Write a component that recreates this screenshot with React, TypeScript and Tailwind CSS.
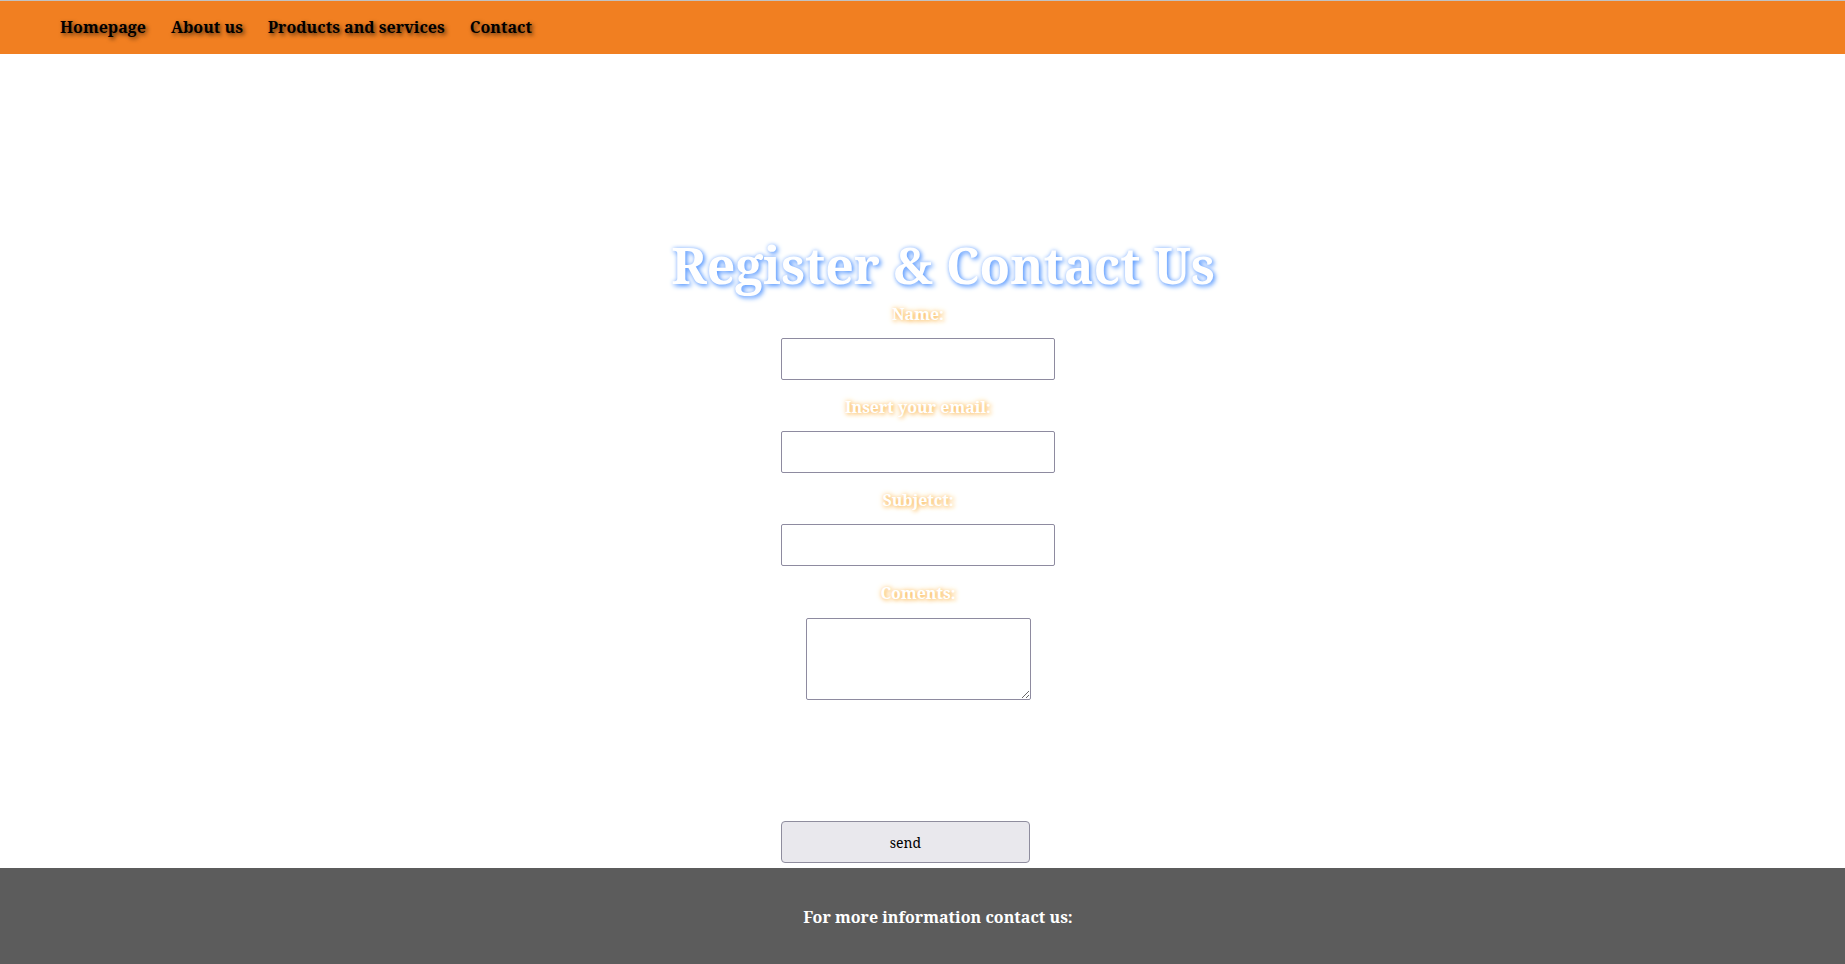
import React from "react";

const serif = "[font-family:'Noto_Serif','DejaVu_Serif',serif]";

export default function App() {
  const navItems = ["Homepage", "About us", "Products and services", "Contact"];
  const labelCls =
    "block text-[16px] leading-[16px] font-bold text-white [text-shadow:1px_1px_4px_#f9b24a,0_0_6px_#ffd89a]";
  const inputCls =
    "block w-[274px] h-[42px] border border-[#8e8ba0] rounded-[2px] bg-white outline-none";
  return (
    <div className={`min-h-screen bg-white ${serif}`}>
      <div className="border-t border-[#c2c2c2]" />
      <nav className="h-[53px] bg-[#f17f21] flex items-center pl-[60px] gap-[25px]">
        {navItems.map((n) => (
          <a
            key={n}
            className="text-[16px] leading-[53px] font-bold text-black [text-shadow:2px_2px_4px_rgba(0,0,0,0.65)]"
          >
            {n}
          </a>
        ))}
      </nav>

      <main className="flex flex-col">
        <h1 className="mt-[186px] pl-[41px] text-center text-[50px] leading-[50px] font-bold text-white [text-shadow:2px_2px_5px_#5d9cff,0_0_4px_#a9c9ff]">
          Register &amp; Contact Us
        </h1>

        <form className="flex flex-col items-center pr-[9px] mt-[16px]">
          <label className={labelCls}>Name:</label>
          <input type="text" className={`${inputCls} mt-[16px]`} />

          <label className={`${labelCls} mt-[19px]`}>Insert your email:</label>
          <input type="text" className={`${inputCls} mt-[16px]`} />

          <label className={`${labelCls} mt-[19px]`}>Subjetct:</label>
          <input type="text" className={`${inputCls} mt-[16px]`} />

          <label className={`${labelCls} mt-[19px]`}>Coments:</label>
          <textarea className="block w-[225px] h-[82px] mt-[17px] border border-[#8e8ba0] rounded-[2px] bg-white outline-none" />

          <div className="w-[274px] mt-[121px]">
            <button
              type="button"
              className="w-[249px] h-[42px] bg-[#e9e8ed] border border-[#8f8d9e] rounded-[4px] text-[14px] text-black font-normal"
            >
              send
            </button>
          </div>
        </form>
      </main>

      <footer className="mt-[5px] h-[160px] bg-[#5c5c5c] pt-[37px] pl-[31px] text-center">
        <p className="text-[16px] leading-[24px] font-bold text-white">
          For more information contact us:
        </p>
      </footer>
    </div>
  );
}
